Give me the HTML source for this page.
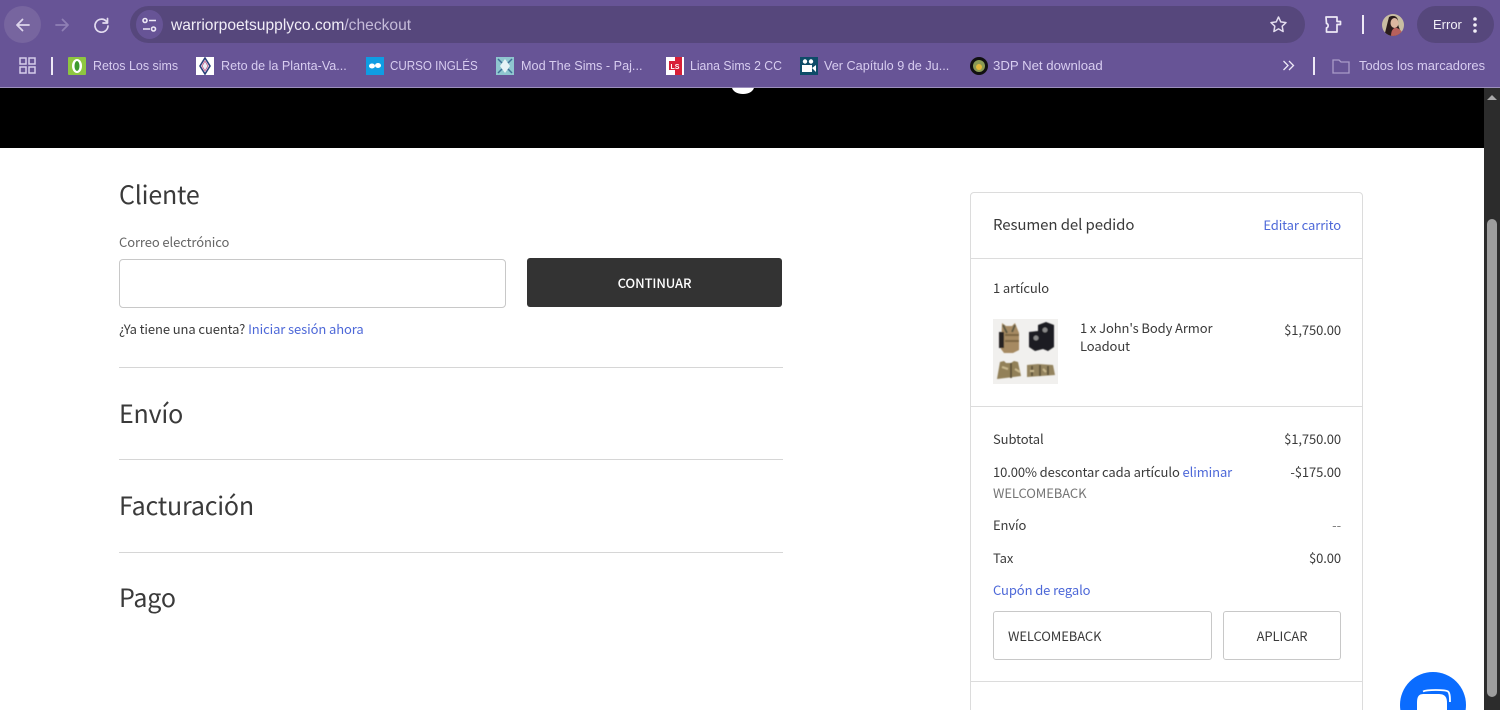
<!DOCTYPE html>
<html lang="es"><head><meta charset="utf-8"><style>
html,body{margin:0;padding:0;width:1500px;height:710px;overflow:hidden}
#w{position:absolute;left:0;top:0;width:1500px;height:710px;overflow:hidden;background:#fff;font-family:"Noto Sans CJK JP","Liberation Sans",sans-serif;color:#3a3a3a}
.a{position:absolute;white-space:nowrap}
.c{font-family:"Liberation Sans",sans-serif;font-size:13.2px;line-height:16px;color:#d8cdf0;transform-origin:0 50%}
.f{position:absolute;top:57px;width:18px;height:18px}
.t{font-size:13px;line-height:18px;letter-spacing:-.1px}
.h{font-size:25px;line-height:34px;color:#3a3a3a;letter-spacing:-.2px}
.l{color:#4d68d8}
.r{right:159px;text-align:right}
.hr{position:absolute;left:119px;width:664px;height:1px;background:#d6d6d6}
.sl{position:absolute;left:971px;width:391px;height:1px;background:#dcdcdc}
</style></head><body><div id="w">
<div class="a" style="left:0;top:0;width:1500px;height:88px;background:#675496"></div>
<div class="a" style="left:0;top:87px;width:1500px;height:1px;background:#9d90bd"></div>
<div class="a" style="left:4px;top:6px;width:37px;height:37px;border-radius:50%;background:#77659f"></div>
<svg class="a" style="left:0;top:0" width="130" height="50" fill="none" stroke-linecap="round" stroke-linejoin="round">
<path d="M29 25H17M22.500 19.500L17 25l5.500 5.500" stroke="#ddd5ec" stroke-width="1.800"/>
<path d="M56 25h12M62.500 19.500L68 25l-5.500 5.500" stroke="#8f7fb5" stroke-width="1.800"/>
<path d="M106.500 21.500A6.500 6.500 0 1 0 108 26M107.500 18.500v4.500H103" stroke="#e3dcf0" stroke-width="1.700"/>
</svg>
<div class="a" style="left:130px;top:6px;width:1175px;height:37px;border-radius:19px;background:#56477c"></div>
<div class="a" style="left:136px;top:10px;width:27px;height:29px;border-radius:50%;background:#675496"></div>
<svg class="a" style="left:140px;top:15px" width="20" height="20" fill="none" stroke="#eee9f6" stroke-width="1.600"><circle cx="5" cy="5.500" r="2"/><path d="M9 5.500h7M3 14h7"/><circle cx="13.500" cy="14" r="2"/></svg>
<div class="a" style="left:171px;top:17px;font-family:'Liberation Sans',sans-serif;font-size:15.6px;line-height:18px;color:#f1edf7">warriorpoetsupplyco.com<span style="color:#c5bbd9">/checkout</span></div>
<svg class="a" style="left:1269px;top:15px" width="19" height="19" fill="none" stroke="#e2dcee" stroke-width="1.500" stroke-linejoin="round"><path d="M9.500 2l2.300 4.900 5.200.7-3.800 3.600.9 5.300-4.600-2.600-4.600 2.600.9-5.300L2 7.600l5.200-.7z"/></svg>
<svg class="a" style="left:1323px;top:14px" width="21" height="21" fill="none" stroke="#eee9f6" stroke-width="1.700" stroke-linejoin="round"><path d="M3 3h11v4.500h3.500v3H14v7.500H3.500v-4.200c2.200 0 2.200-4.300 0-4.300z"/></svg>
<div class="a" style="left:1362px;top:15px;width:2px;height:19px;background:#eee9f6"></div>
<svg class="a" style="left:1382px;top:14px" width="22" height="22" viewBox="0 0 22 22"><clipPath id="av"><circle cx="11" cy="11" r="11"/></clipPath><g clip-path="url(#av)"><rect width="22" height="22" fill="#c9bda2"/><path d="M7 3c5-3 10 0 9 6 0 5 4 8 3 13H2c2-6 3-12 5-19z" fill="#2a1c1c"/><ellipse cx="12.500" cy="9" rx="4" ry="5" fill="#dcb7a0"/><path d="M9 22c0-6 3-9 6-8s6 4 6 8z" fill="#b8605c"/></g></svg>
<div class="a" style="left:1417px;top:6px;width:77px;height:37px;border-radius:19px;background:#56477c"></div>
<div class="a" style="left:1433px;top:17px;font-family:'Liberation Sans',sans-serif;font-size:13px;line-height:16px;color:#f3f0f8">Error</div>
<svg class="a" style="left:1472px;top:16px" width="6" height="18" fill="#f3f0f8"><circle cx="3" cy="3" r="1.800"/><circle cx="3" cy="9" r="1.800"/><circle cx="3" cy="15" r="1.800"/></svg>

<svg class="a" style="left:19px;top:57px" width="17" height="17" fill="none" stroke="#d6cdea" stroke-width="1.500"><rect x="1" y="1" width="6" height="6"/><rect x="10" y="1" width="6" height="6"/><rect x="1" y="10" width="6" height="6"/><rect x="10" y="10" width="6" height="6"/></svg>
<div class="a" style="left:51px;top:57px;width:2px;height:18px;background:#eee9f6"></div>
<svg class="f" style="left:68px" viewBox="0 0 18 18"><rect width="18" height="18" rx="1" fill="#8ec640"/><ellipse cx="9" cy="9" rx="5" ry="7" fill="#fff"/><ellipse cx="9" cy="9" rx="2.500" ry="5" fill="#3d9a2f"/></svg>
<div class="a c" style="left:93px;top:57.500px;transform:scaleX(.944)">Retos Los sims</div>
<svg class="f" style="left:196px" viewBox="0 0 18 18"><rect width="18" height="18" fill="#fff"/><path d="M9 1l5 8-5 8-5-8z" fill="none" stroke="#2a3f7a" stroke-width="1.600"/><path d="M9 4l3 5-3 5-3-5z" fill="#e8f0f5" stroke="#c65a8a" stroke-width=".8"/></svg>
<div class="a c" style="left:221px;top:57.500px;transform:scaleX(.955)">Reto de la Planta-Va...</div>
<svg class="f" style="left:366px" viewBox="0 0 18 18"><rect width="18" height="18" fill="#0f9de3"/><ellipse cx="6" cy="9" rx="3" ry="2.500" fill="#fff"/><ellipse cx="12" cy="8.500" rx="3" ry="2.500" fill="#fff"/></svg>
<div class="a c" style="left:390px;top:57.500px;transform:scaleX(.88)">CURSO INGLÉS</div>
<svg class="f" style="left:496px" viewBox="0 0 18 18"><rect width="18" height="18" fill="#8fc6cf"/><path d="M9 2l5 7-5 7-5-7z" fill="#e6f3f6"/><path d="M2 2l4 4M16 2l-4 4M2 16l4-4M16 16l-4-4" stroke="#3e6f96" stroke-width="1.500"/></svg>
<div class="a c" style="left:521px;top:57.500px;transform:scaleX(.96)">Mod The Sims - Paj...</div>
<svg class="f" style="left:666px" viewBox="0 0 18 18"><rect width="18" height="18" fill="#fff"/><rect x="9" y="0" width="7" height="18" fill="#d81f37"/><rect x="3" y="4" width="6" height="9" fill="#d81f37"/><text x="9" y="12" font-family="Liberation Sans,sans-serif" font-size="7" font-weight="700" fill="#fff" text-anchor="middle">LS</text></svg>
<div class="a c" style="left:690px;top:57.500px;transform:scaleX(.93)">Liana Sims 2 CC</div>
<svg class="f" style="left:800px" viewBox="0 0 18 18"><rect width="18" height="18" fill="#0e4c68"/><circle cx="5" cy="4.500" r="2.200" fill="#fff"/><circle cx="11" cy="4.500" r="2.200" fill="#fff"/><rect x="2" y="8" width="10" height="7" fill="#fff"/><path d="M12 11l4-3v7z" fill="#fff"/></svg>
<div class="a c" style="left:824px;top:57.500px;transform:scaleX(.96)">Ver Capítulo 9 de Ju...</div>
<svg class="f" style="left:970px" viewBox="0 0 18 18"><circle cx="9" cy="9" r="9" fill="#111"/><circle cx="9" cy="9" r="6" fill="#8a9a55"/><circle cx="9" cy="10" r="3" fill="#e2b93c"/></svg>
<div class="a c" style="left:993px;top:57.500px">3DP Net download</div>
<svg class="a" style="left:1282px;top:59px" width="13" height="13" fill="none" stroke="#eee9f6" stroke-width="1.300"><path d="M1.500 2l4.500 4.500L1.500 11M7 2l4.500 4.500L7 11"/></svg>
<div class="a" style="left:1313px;top:57px;width:2px;height:18px;background:#eee9f6"></div>
<svg class="a" style="left:1332px;top:57px" width="18" height="17" fill="none" stroke="#a99bc8" stroke-width="1.300"><path d="M1 3h6l2 2h8v11H1z"/></svg>
<div class="a c" style="left:1359px;top:57.500px;transform:scaleX(.977)">Todos los marcadores</div>

<div class="a" style="left:0;top:88px;width:1484px;height:60px;background:#000"></div>
<div class="a" style="left:732px;top:80px;width:22px;height:14px;border-radius:50%;background:#fff;clip-path:inset(8px 0 0 0)"></div>

<div class="a" style="left:1484px;top:88px;width:16px;height:622px;background:#2c2c2c"></div>
<svg class="a" style="left:1484px;top:92px" width="16" height="10"><path d="M3 8l5-5 5 5z" fill="#a8a8a8"/></svg>
<div class="a" style="left:1487px;top:219px;width:10px;height:478px;border-radius:5px;background:#9d9d9d"></div>

<div class="a h" style="left:119px;top:177px">Cliente</div>
<div class="a t" style="left:119px;top:233px;color:#666">Correo electrónico</div>
<div class="a" style="left:119px;top:259px;width:385px;height:47px;border:1px solid #c8c8c8;border-radius:4px"></div>
<div class="a" style="left:527px;top:258px;width:255px;height:49px;border-radius:3px;background:#333;color:#fff;font-size:13px;line-height:49px;text-align:center;font-weight:500;letter-spacing:-.1px">CONTINUAR</div>
<div class="a t" style="left:119px;top:320px">¿Ya tiene una cuenta? <span class="l">Iniciar sesión ahora</span></div>
<div class="hr" style="top:367px"></div>
<div class="a h" style="left:119px;top:396px">Envío</div>
<div class="hr" style="top:459px"></div>
<div class="a h" style="left:119px;top:488px">Facturación</div>
<div class="hr" style="top:552px"></div>
<div class="a h" style="left:119px;top:580px">Pago</div>

<div class="a" style="left:970px;top:192px;width:391px;height:530px;border:1px solid #dcdcdc;border-radius:4px"></div>
<div class="a" style="left:993px;top:214px;font-size:15px;line-height:22px;letter-spacing:-.1px">Resumen del pedido</div>
<div class="a t l" style="right:159px;top:216px">Editar carrito</div>
<div class="sl" style="top:258px"></div>
<div class="a t" style="left:993px;top:279px">1 artículo</div>
<svg class="a" style="left:993px;top:319px" width="65" height="65" viewBox="0 0 65 65">
<defs><filter id="b" x="-5%" y="-5%" width="110%" height="110%"><feGaussianBlur stdDeviation=".5"/></filter></defs>
<rect width="65" height="65" fill="#f1f0ee"/>
<g filter="url(#b)">
<path d="M9 4l4 3h6l3-3 2 5 2 5v17l-6 3H11l-3-4z" fill="#a68a62"/><path d="M6 13l5 0v16H6z" fill="#262320"/><path d="M12 16h14M12 22h14" stroke="#7c6543" stroke-width="2"/><path d="M10 6l4 8M22 6l-3 7" stroke="#5f5a44" stroke-width="2"/>
<path d="M36 13l9-1 0-6 8-3 8 3 0 22-6 4-5-2-8 2-6-4z" fill="#1d1d20"/><circle cx="43" cy="19" r="2.500" fill="#8a8a8a"/><circle cx="52" cy="11" r="2.500" fill="#8a8a8a"/>
<path d="M7 43l4-1 2 2h5l3-2 4 1 3 14-24 3z" fill="#928059"/><path d="M34 46l11-1 15 1 2 10-28 2z" fill="#94845f"/><path d="M18 44v15M47 46v11M39 47v10M55 47v9" stroke="#5c5138" stroke-width="1.800"/><path d="M9 48l6 2M22 50l5 3M37 52h4M50 50l3 3" stroke="#c9b88d" stroke-width="2"/>
</g>
</svg>
<div class="a t" style="left:1080px;top:318.500px">1 x John's Body Armor</div>
<div class="a t" style="left:1080px;top:336.500px">Loadout</div>
<div class="a t r" style="top:321px">$1,750.00</div>
<div class="sl" style="top:406px"></div>
<div class="a t" style="left:993px;top:429.500px">Subtotal</div><div class="a t r" style="top:429.500px">$1,750.00</div>
<div class="a t" style="left:993px;top:463px">10.00% descontar cada artículo <span class="l">eliminar</span></div><div class="a t r" style="top:463px">-$175.00</div>
<div class="a t" style="left:993px;top:483.500px;color:#757575">WELCOMEBACK</div>
<div class="a t" style="left:993px;top:515.500px">Envío</div><div class="a t r" style="top:515.500px;color:#777">--</div>
<div class="a t" style="left:993px;top:548.500px">Tax</div><div class="a t r" style="top:548.500px">$0.00</div>
<div class="a t l" style="left:993px;top:580.500px">Cupón de regalo</div>
<div class="a t" style="left:993px;top:611px;width:217px;height:47px;border:1px solid #c8c8c8;border-radius:3px;line-height:47px;text-indent:14px">WELCOMEBACK</div>
<div class="a t" style="left:1223px;top:611px;width:116px;height:47px;border:1px solid #c8c8c8;border-radius:3px;line-height:47px;text-align:center">APLICAR</div>
<div class="sl" style="top:681px"></div>

<div class="a" style="left:1400px;top:672px;width:66px;height:66px;border-radius:50%;background:#0a6cff"></div>
<svg class="a" style="left:1414px;top:688px" width="38" height="22"><path d="M9 3.500C13 1.500 31 1.500 34 3.500 36 5 36 10 36 14" fill="none" stroke="#fff" stroke-width="1.800"/><path d="M3 15c0-7 2-9 7-9h14c6 0 9 2 9 9v7H3z" fill="#fff"/></svg>
</div></body></html>
